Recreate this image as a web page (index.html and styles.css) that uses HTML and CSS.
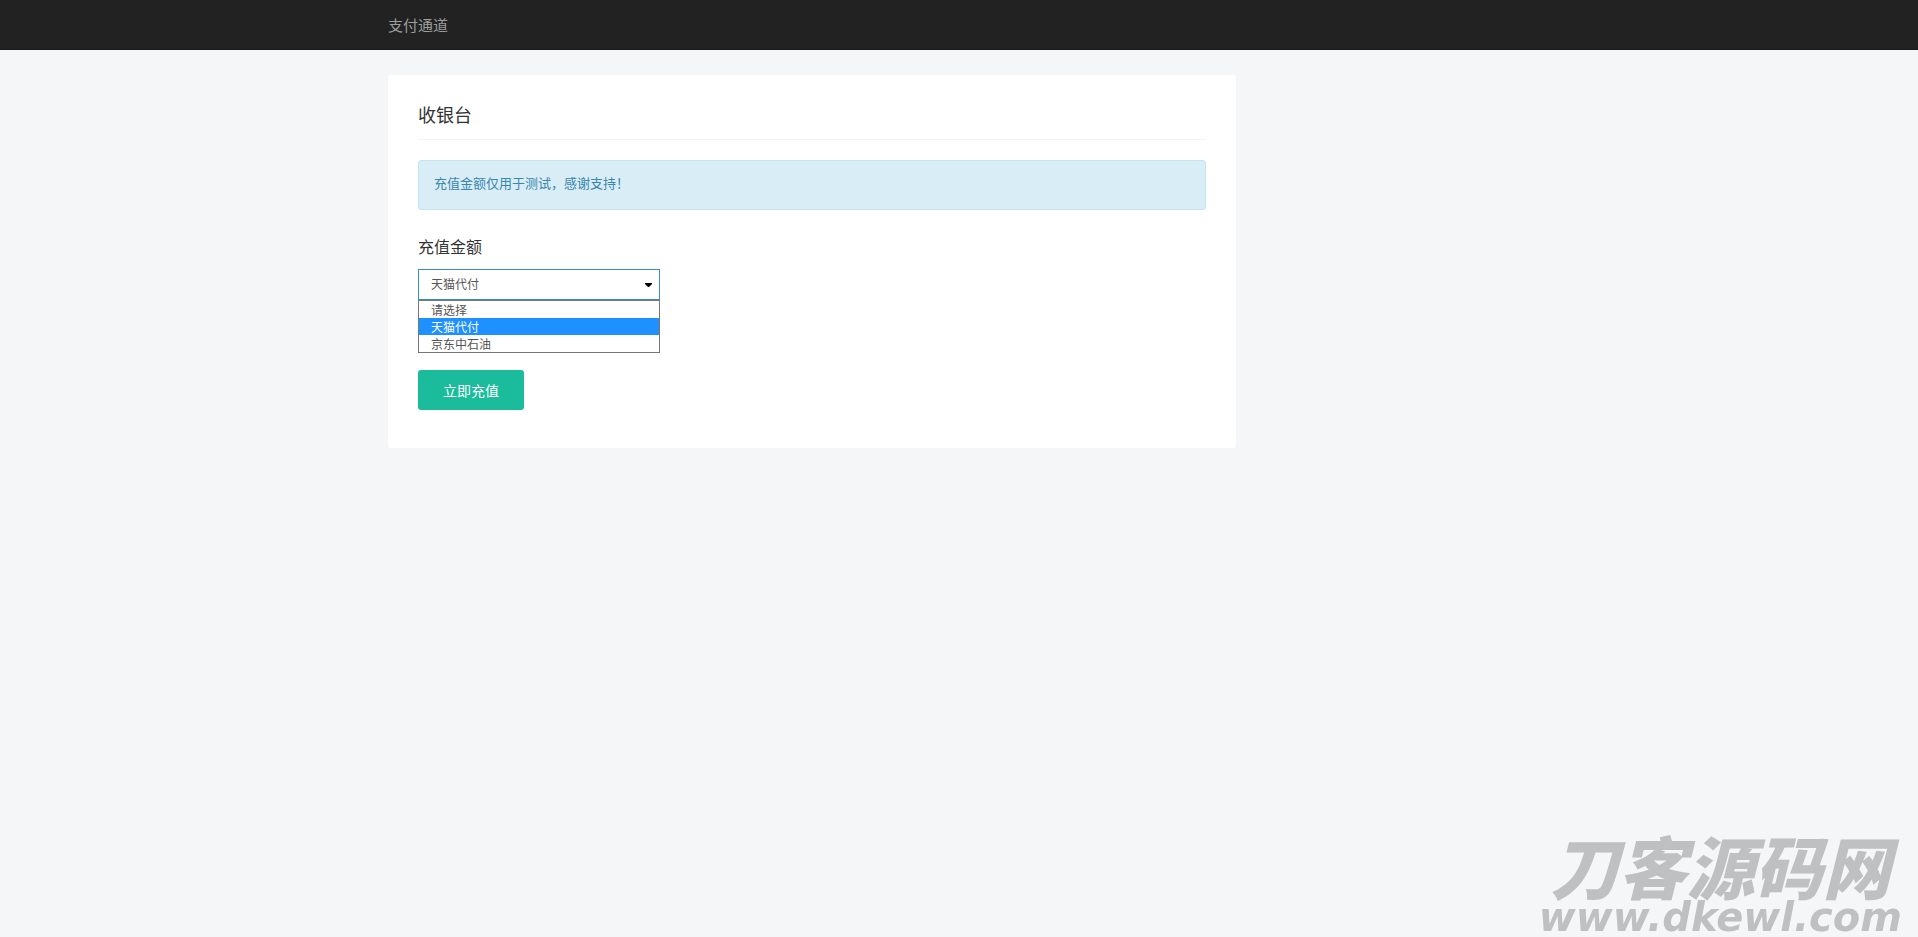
FILE: index.html
```html
<!DOCTYPE html>
<html lang="zh-CN">
<head>
<meta charset="utf-8">
<title>收银台</title>
<link rel="stylesheet" href="styles.css">
</head>
<body>
<header class="navbar">
  <div class="container"><a class="brand" href="#">支付通道</a></div>
</header>
<main class="container">
  <section class="card">
    <h1 class="title">收银台</h1>
    <p class="alert">充值金额仅用于测试，感谢支持！</p>
    <form class="form">
      <label class="label" for="channel">充值金额</label>
      <div class="picker">
        <select class="select" id="channel">
          <option>请选择</option>
          <option selected>天猫代付</option>
          <option>京东中石油</option>
        </select>
        <svg class="caret" viewBox="0 0 7 4" aria-hidden="true"><path d="M0 0H7V1L4 4H3L0 1Z"/></svg>
        <ul class="menu" role="listbox" aria-label="充值金额">
          <li class="option" role="option">请选择</li>
          <li class="option option-active" role="option" aria-selected="true">天猫代付</li>
          <li class="option" role="option">京东中石油</li>
        </ul>
      </div>
      <button class="submit" type="button">立即充值</button>
    </form>
  </section>
</main>
<div class="watermark">
  <span class="mark-name">刀客源码网</span>
  <span class="mark-url">www.dkewl.com</span>
</div>
</body>
</html>
```
FILE: styles.css
```css
* { box-sizing: border-box; }
body {
  margin: 0;
  min-height: 100vh;
  background: #f4f6f8;
  color: #333;
  font-family: "Noto Sans CJK SC", sans-serif;
  font-weight: 400;
  font-size: 13px;
}
.container {
  max-width: 1142px;
  margin: 0 auto;
}
.navbar {
  background: #222;
  border-bottom: 1px solid #1a1a1a;
}
.brand {
  display: inline-block;
  color: #9d9d9d;
  font-size: 15px;
  line-height: 20px;
  padding: 15px 0 14px;
  vertical-align: top;
  text-decoration: none;
}
.card {
  max-width: 848px;
  margin-top: 25px;
  padding: 29px 30px 38px;
  background: #fff;
  border-radius: 3px;
}
.title {
  margin: 0 0 20px;
  padding-bottom: 15px;
  border-bottom: 1px solid #f2f3f4;
  font-size: 18px;
  font-weight: 400;
  line-height: 20px;
}
.alert {
  margin: 0 0 25px;
  padding: 13px 15px 17px;
  border: 1px solid #c5e4f1;
  border-radius: 3px;
  background: #d9edf7;
  color: #3a87ad;
  line-height: 18px;
}
.form {
  display: flex;
  flex-direction: column;
  align-items: flex-start;
}
.label {
  margin-bottom: 12px;
  font-size: 16px;
  line-height: 22px;
}
.picker {
  position: relative;
  width: 242px;
  margin-bottom: 70px;
}
.select {
  display: block;
  width: 100%;
  height: 31px;
  padding: 0 12px 3px;
  border: 1px solid #3c8dbc;
  border-radius: 0;
  background: #fff;
  color: #555;
  font: inherit;
  font-size: 12px;
  appearance: none;
}
.caret {
  position: absolute;
  top: 14px;
  right: 8px;
  width: 7px;
  height: 4px;
}
.menu {
  position: absolute;
  top: 100%;
  left: 0;
  right: 0;
  margin: 0;
  padding: 0;
  border: 1px solid #767676;
  background: #fff;
  list-style: none;
}
.option {
  padding-left: 12px;
  color: #555;
  font-size: 12px;
  line-height: 17px;
}
.option-active {
  background: #1e90ff;
  color: #fff;
}
.submit {
  padding: 10px 25px;
  border: 0;
  border-radius: 3px;
  background: #1abc9c;
  color: #fff;
  font: inherit;
  font-size: 14px;
  line-height: 20px;
}
.watermark {
  position: fixed;
  right: 16px;
  bottom: 2px;
  display: flex;
  flex-direction: column;
  align-items: center;
  color: #bfc0c2;
  font-style: italic;
  font-weight: 900;
}
.mark-name {
  font-size: 68px;
  line-height: 68px;
}
.mark-url {
  font-family: "DejaVu Sans", sans-serif;
  font-size: 40px;
  line-height: 36px;
}
```
